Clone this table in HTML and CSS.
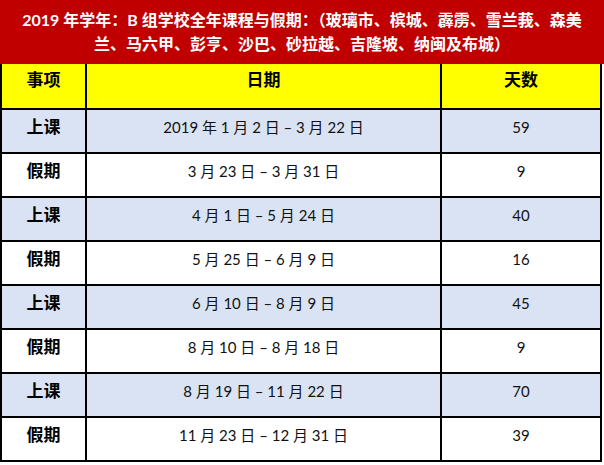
FILE: index.html
```html
<!DOCTYPE html>
<html lang="zh-CN">
<head>
<meta charset="utf-8">
<title>2019 年学年 B 组学校全年课程与假期</title>
<link rel="stylesheet" href="styles.css">
</head>
<body>
<div class="sheet">
  <div class="title">2019 年学年：B 组学校全年课程与假期：（玻璃市、槟城、霹雳、雪兰莪、森美<br>兰、马六甲、彭亨、沙巴、砂拉越、吉隆坡、纳闽及布城）</div>
  <div class="grid">
    <div class="cell head">事项</div>
    <div class="cell head">日期</div>
    <div class="cell head">天数</div>

    <div class="cell item blue">上课</div>
    <div class="cell date blue">2019 年 1 月 2 日 – 3 月 22 日</div>
    <div class="cell num blue">59</div>

    <div class="cell item">假期</div>
    <div class="cell date">3 月 23 日 – 3 月 31 日</div>
    <div class="cell num">9</div>

    <div class="cell item blue">上课</div>
    <div class="cell date blue">4 月 1 日 – 5 月 24 日</div>
    <div class="cell num blue">40</div>

    <div class="cell item">假期</div>
    <div class="cell date">5 月 25 日 – 6 月 9 日</div>
    <div class="cell num">16</div>

    <div class="cell item blue">上课</div>
    <div class="cell date blue">6 月 10 日 – 8 月 9 日</div>
    <div class="cell num blue">45</div>

    <div class="cell item">假期</div>
    <div class="cell date">8 月 10 日 – 8 月 18 日</div>
    <div class="cell num">9</div>

    <div class="cell item blue">上课</div>
    <div class="cell date blue">8 月 19 日 – 11 月 22 日</div>
    <div class="cell num blue">70</div>

    <div class="cell item">假期</div>
    <div class="cell date">11 月 23 日 – 12 月 31 日</div>
    <div class="cell num">39</div>
  </div>
</div>
</body>
</html>
```
FILE: styles.css
```css
html, body {
  margin: 0;
  padding: 0;
  background: #ffffff;
}
.sheet {
  width: 604px;
  font-family: "Lato", "Noto Sans CJK SC", sans-serif;
}
.title {
  height: 64px;
  box-sizing: border-box;
  background: #c00000;
  color: #ffffff;
  font-weight: bold;
  font-size: 16px;
  line-height: 24px;
  padding-top: 8px;
  text-align: center;
}
.grid {
  width: 602px;
  box-sizing: border-box;
  display: grid;
  grid-template-columns: 83px 353px 158px;
  grid-template-rows: 44px repeat(8, 42px);
  gap: 2px;
  padding: 0 2px 2px 2px;
  background: #000000;
}
.cell {
  background: #ffffff;
  text-align: center;
  color: #111111;
  font-size: 15px;
  line-height: 20px;
  padding-top: 7px;
  box-sizing: border-box;
}
.head {
  background: #ffff00;
  color: #000000;
  font-weight: bold;
  font-size: 17px;
  padding-top: 6px;
}
.item {
  color: #000000;
  font-weight: bold;
  font-size: 17px;
}
.blue {
  background: #dae3f3;
}
```
